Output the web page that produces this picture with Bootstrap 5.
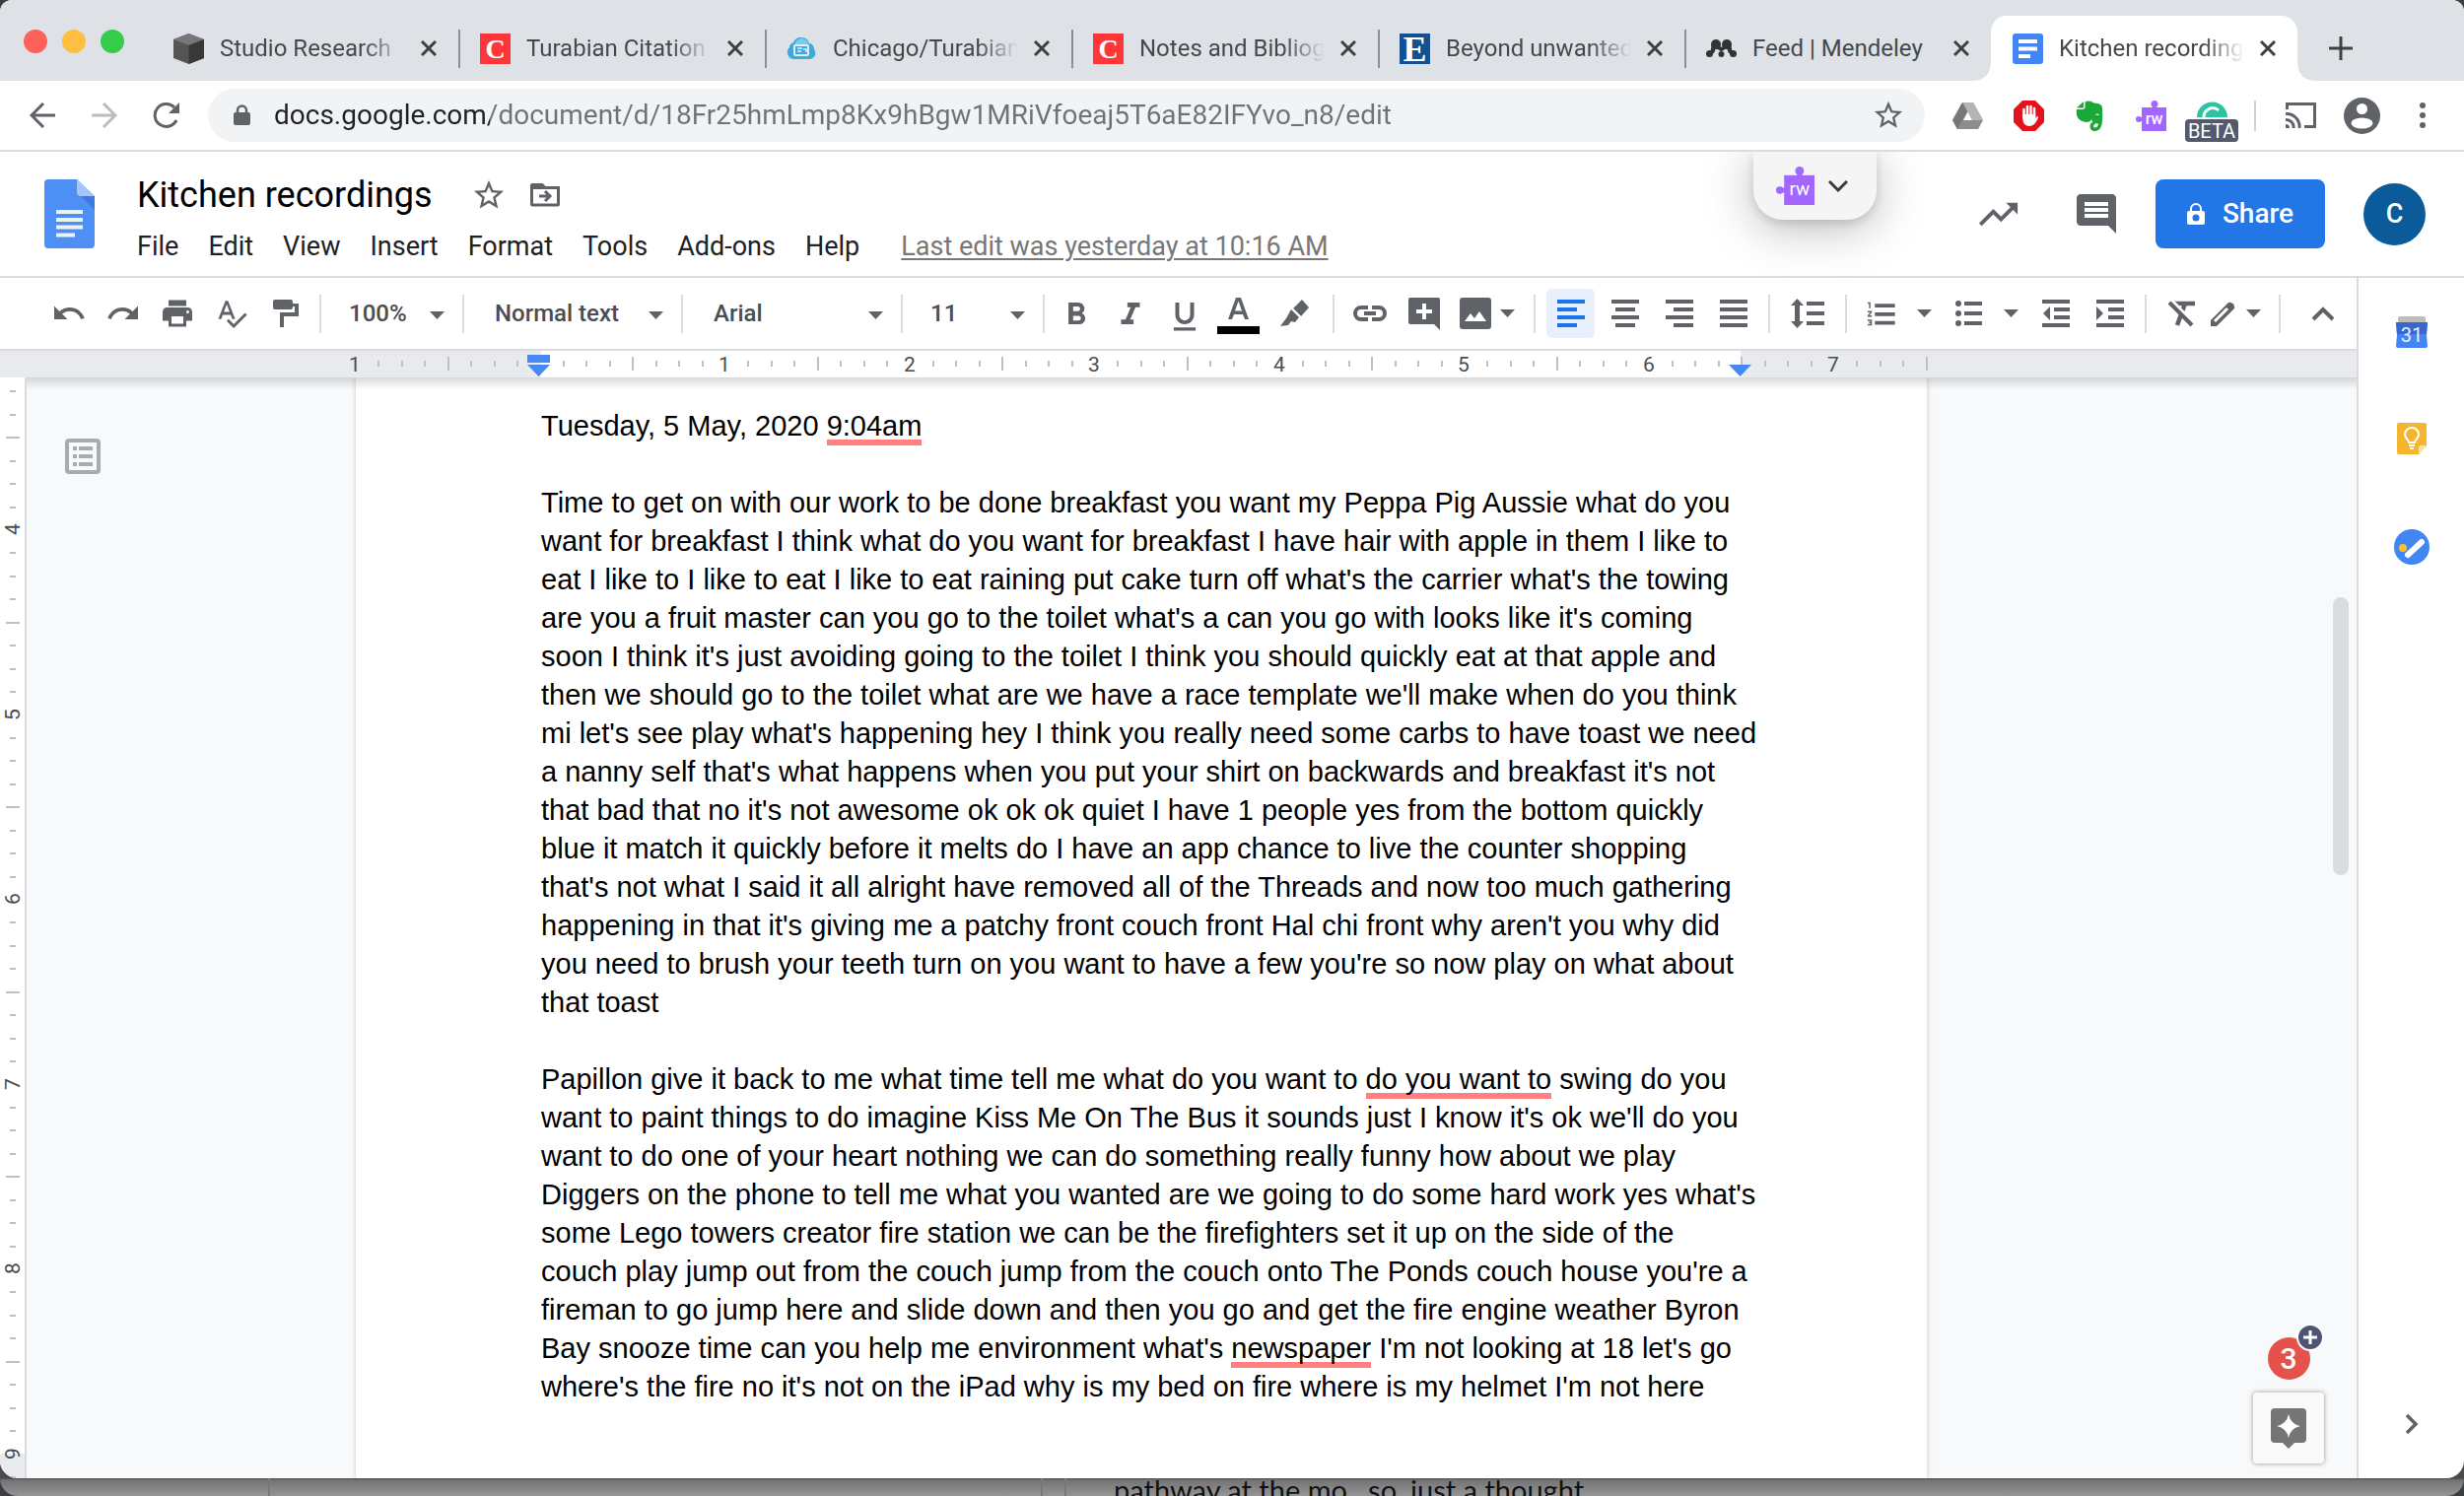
<!DOCTYPE html>
<html lang="en">
<head>
<meta charset="utf-8">
<meta name="viewport" content="width=device-width, initial-scale=1">
<title>Kitchen recordings - Google Docs</title>
<link rel="stylesheet" href="https://cdn.jsdelivr.net/npm/bootstrap@5.3.0/dist/css/bootstrap.min.css">
<style>
:root{--ink:#5f6368;--line:#dadce0;--docblue:#4688f4}
body{font-family:Roboto,"Liberation Sans",sans-serif;background:#3a3d42;color:#202124}
button{border:0;background:none;padding:0;color:inherit}
svg{display:block;flex:none}
.ico{fill:currentColor}
.win{background:#fff;border-radius:12px 12px 18px 18px;overflow:hidden;min-height:0}

/* tab strip */
.strip{background:#dee1e6;height:82px;padding:16px 0 0 24px}
.lights{gap:15px;width:130px;padding-bottom:14px}
.light{width:24px;height:24px;border-radius:50%}
.tabitem{flex:0 1 311px;min-width:0;height:66px;padding:0 22px;gap:16px;position:relative;font-size:24px;color:#45494d;text-decoration:none}
.tabitem+.tabitem:not(.on)::before{content:"";position:absolute;left:0;top:14px;height:39px;width:2px;background:#8b8f94}
.tabtext{white-space:nowrap;overflow:hidden;-webkit-mask-image:linear-gradient(90deg,#000 78%,transparent);mask-image:linear-gradient(90deg,#000 78%,transparent)}
.tabtext.full{-webkit-mask-image:none;mask-image:none}
.on{background:#fff;border-radius:16px 16px 0 0}
.on::before,.on::after{content:"";position:absolute;bottom:0;width:16px;height:16px}
.on::before{left:-16px;background:radial-gradient(circle at 0 0,transparent 15px,#fff 16px)}
.on::after{right:-16px;background:radial-gradient(circle at 100% 0,transparent 15px,#fff 16px)}
.newtab{width:87px;color:#3c4043}

/* address row */
.addr{height:72px;padding:0 11px;border-bottom:2px solid var(--line);color:var(--ink)}
.cell{width:63px;height:54px;display:flex;align-items:center;justify-content:center;position:relative}
.pill~.cell{width:62px}
.pill{background:#f1f3f4;height:54px;border-radius:27px;margin:0 12px 0 11px;padding:0 20px 0 26px}
.url{border:0;outline:0;font-size:28px;min-width:0;padding:0;margin-left:24px;background:linear-gradient(90deg,#202124 219px,#6f7377 219px);-webkit-background-clip:text;background-clip:text;color:transparent}
.vsep{width:2px;height:31px;background:#d0d2d5;margin:0 14px 0 12px}
.beta{position:absolute;left:4px;bottom:0;width:54px;height:23px;border-radius:4px;background:#545a6d;color:#fff;font-size:20px;line-height:24px;text-align:center}

/* document header */
.dochead{height:128px;padding:0 39px 0 45px;border-bottom:2px solid var(--line);position:relative}
.headtext{padding:9px 0 0 43px}
.title{border:0;outline:0;padding:0;font-size:36px;line-height:44px;height:44px;width:331px;color:#000}
.menu{font-size:27px;line-height:36px;gap:30px;margin-top:12px}
.menu a{color:#202124;text-decoration:none}
.menu .last{color:#777;text-decoration:underline;margin-left:12px;text-underline-offset:3px;text-decoration-thickness:2px}
.share{background:#2376e5;color:#fff;width:172px;height:70px;border-radius:8px;font-size:28px;font-weight:500;gap:18px}
.avatar{width:63px;height:63px;border-radius:50%;background:#0b5a99;color:#fff;font-size:27px;font-weight:500;margin-left:39px}
.rwpop{position:absolute;top:0;right:596px;width:125px;height:69px;border-radius:0 0 30px 30px;background:#f5f5f5;box-shadow:0 8px 50px rgba(0,0,0,.28),0 4px 10px rgba(0,0,0,.12);gap:14px;padding:0 6px 0 0;color:#3c3c3c;clip-path:inset(0 -90px -110px -90px)}

/* toolbar */
.tools{height:74px;padding-left:42px;color:var(--ink);border-bottom:2px solid var(--line)}
.tb{width:49px;height:50px;margin:0 3px;border-radius:5px;display:flex;align-items:center;justify-content:center;flex:none}
.tb.sel{background:#e8f0fe;color:#1a73e8}
.wide{width:54px}.slim{width:24px}.fit{width:44px}
.drop{width:33px;height:50px;padding-left:8px;flex:none}
.drop.near{width:26px;padding-left:0}
.tsep{width:2px;height:39px;background:var(--line);flex:none;margin:0 8px}
.tsep.flush{margin:0 0 0 7px}.tsep.tight{margin:0}
.pick{appearance:none;-webkit-appearance:none;border:0;outline:0;height:50px;padding:0 0 0 31px;font-size:24px;font-weight:500;color:#4a4d51;flex:none;background:url("data:image/svg+xml,%3Csvg xmlns='http://www.w3.org/2000/svg' width='15' height='8'%3E%3Cpath d='M0 0h15L7.500 8z' fill='%235f6368'/%3E%3C/svg%3E") no-repeat right 18px top 23px}
.pick.zoom{width:143px;padding-left:28px}.pick.style{width:220px}.pick.face{width:221px}.pick.size{width:142px;padding-left:28px}

/* rulers and page */
.hruler{height:27px;background:#e8eaed;padding-left:361px}
.hruler svg,.vruler svg{overflow:visible;font-size:21px;fill:#4a4d51}
.vruler{width:27px;border-right:2px solid var(--line);overflow:hidden}
.canvas{background:#f8f9fb;position:relative;min-height:0;overflow:hidden}
.canvas::before{content:"";position:absolute;z-index:2;left:0;right:0;top:0;height:12px;background:linear-gradient(rgba(60,64,67,.2),transparent)}
.outline{padding:62px 0 0 39px;width:334px;color:#a9abae}
.sheet{width:1594px;background:#fff;padding:30px 0 0 188px;box-shadow:0 0 5px rgba(60,64,67,.25);font-family:"Liberation Sans",Arial,sans-serif;font-size:29px;line-height:39px;color:#000;white-space:nowrap}
.sheet p{margin:0 0 39px}
.err{padding-bottom:4px;background:linear-gradient(#ff8080,#ff8080) no-repeat bottom/100% 6px}
.thumb{position:absolute;right:8px;top:223px;width:16px;height:282px;border-radius:8px;background:#dadce0}
.float{position:absolute;right:33px;bottom:15px;z-index:3}
.explore{width:72px;height:72px;border-radius:4px;background:#fafafa;box-shadow:0 0 5px rgba(0,0,0,.4);color:#757575}
.count{width:43px;height:43px;border-radius:50%;background:#e5524b;color:#fff;font-size:30px;font-weight:500;line-height:43px;text-align:center;position:relative;margin-bottom:13px}
.count svg{position:absolute;left:29px;top:-14px}
.side{width:109px;border-left:2px solid var(--line);padding:39px 0 45px}
.side .links{gap:76px}

/* window behind */
.behind{height:18px;flex:none;margin-top:-20px;padding-top:20px;box-sizing:content-box;background:linear-gradient(#4a4a4a 20px,#747474 22px,#959595);z-index:-1;position:relative;border-radius:0 0 18px 18px;overflow:hidden;font-family:Lato,"Noto Sans",sans-serif;font-size:29px;line-height:24px;color:#111}
.behind .pane{flex:0 0 274px;border-right:2px solid #777}
.behind .pane.two{flex-basis:784px}.behind .pane.three{flex-basis:24px}
</style>
</head>
<body class="vh-100 d-flex flex-column overflow-hidden">
<main class="win flex-grow-1 d-flex flex-column">

<nav class="strip d-flex flex-shrink-0" aria-label="Tabs">
  <div class="lights d-flex align-items-center flex-shrink-0">
    <span class="light" style="background:#fc615c"></span><span class="light" style="background:#fdbe41"></span><span class="light" style="background:#35cb4b"></span>
  </div>
  <a class="tabitem d-flex align-items-center" href="#"><svg width="31" height="31" viewBox="0 0 31 31"><path d="M15.500 0 31 6v19l-15.500 6L0 25V6z" fill="#555"/><path d="M15.500 0 31 6l-15.500 6L0 6z" fill="#777"/><path d="M31 6v19l-15.500 6V12z" fill="#383838"/></svg><span class="tabtext flex-grow-1">Studio Research</span><svg width="16" height="16" viewBox="0 0 16 16"><path d="M1 1l14 14M15 1 1 15" stroke="#3c4043" stroke-width="3"/></svg></a>
  <a class="tabitem d-flex align-items-center" href="#"><svg width="31" height="31"><rect width="31" height="31" fill="#ff3639"/><text x="15.500" y="25" text-anchor="middle" font-family="Liberation Serif" font-weight="700" font-size="28" fill="#fff">C</text></svg><span class="tabtext flex-grow-1">Turabian Citation</span><svg width="16" height="16" viewBox="0 0 16 16"><path d="M1 1l14 14M15 1 1 15" stroke="#3c4043" stroke-width="3"/></svg></a>
  <a class="tabitem d-flex align-items-center" href="#"><svg width="31" height="31" viewBox="0 0 31 31"><path d="M8 26a7 7 0 0 1-5-12c0-2 1-4 4-5 1-3 4-5 8-5s7 2 8 6c3 0 5 3 5 6 3 4 1 9-4 10z" fill="#3fa9da"/><path d="M8 12c1-5 5-7 7-7 4 0 7 2 7 6" fill="#7ccaf0"/><rect x="8" y="12" width="14" height="10" rx="1" fill="none" stroke="#d9f1fc" stroke-width="2"/><path d="M11 15h5M11 18h4M17 16h3v3" stroke="#d9f1fc" fill="none" stroke-width="1.500"/></svg><span class="tabtext flex-grow-1">Chicago/Turabian</span><svg width="16" height="16" viewBox="0 0 16 16"><path d="M1 1l14 14M15 1 1 15" stroke="#3c4043" stroke-width="3"/></svg></a>
  <a class="tabitem d-flex align-items-center" href="#"><svg width="31" height="31"><rect width="31" height="31" fill="#ff3639"/><text x="15.500" y="25" text-anchor="middle" font-family="Liberation Serif" font-weight="700" font-size="28" fill="#fff">C</text></svg><span class="tabtext flex-grow-1">Notes and Bibliog</span><svg width="16" height="16" viewBox="0 0 16 16"><path d="M1 1l14 14M15 1 1 15" stroke="#3c4043" stroke-width="3"/></svg></a>
  <a class="tabitem d-flex align-items-center" href="#"><svg width="31" height="31"><rect width="31" height="31" fill="#12518e"/><text x="15.500" y="28" text-anchor="middle" font-family="Liberation Serif" font-weight="700" font-size="36" fill="#fff">E</text></svg><span class="tabtext flex-grow-1">Beyond unwanted</span><svg width="16" height="16" viewBox="0 0 16 16"><path d="M1 1l14 14M15 1 1 15" stroke="#3c4043" stroke-width="3"/></svg></a>
  <a class="tabitem d-flex align-items-center" href="#"><svg width="31" height="31" viewBox="0 0 31 31" fill="#333"><circle cx="10" cy="11" r="5"/><circle cx="21" cy="11" r="5"/><circle cx="3.500" cy="20.500" r="3.500"/><circle cx="27.500" cy="20.500" r="3.500"/><circle cx="15.500" cy="21" r="3"/><path d="M6 10h5l4.500 4L20 10h5l2 11-4-1-2-5-5 3h-1l-5-3-2 5-4 1z"/></svg><span class="tabtext full flex-grow-1">Feed | Mendeley</span><svg width="16" height="16" viewBox="0 0 16 16"><path d="M1 1l14 14M15 1 1 15" stroke="#3c4043" stroke-width="3"/></svg></a>
  <a class="tabitem on d-flex align-items-center" href="#" aria-current="page"><svg width="31" height="31"><rect width="31" height="31" rx="3" fill="#4285f4"/><path d="M6 8h19M6 15.500h19M6 23h12" stroke="#fff" stroke-width="4"/></svg><span class="tabtext flex-grow-1">Kitchen recording</span><svg width="16" height="16" viewBox="0 0 16 16"><path d="M1 1l14 14M15 1 1 15" stroke="#3c4043" stroke-width="3"/></svg></a>
  <button class="newtab d-flex align-items-center justify-content-center" aria-label="New tab"><svg width="24" height="24"><path d="M12 0v24M0 12h24" stroke="#3c4043" stroke-width="3"/></svg></button>
</nav>

<div class="addr d-flex align-items-center flex-shrink-0">
  <button class="cell" aria-label="Back"><svg width="26" height="26" fill="none" stroke="#5f6368" stroke-width="3"><path d="M26 13H2M14 1 2 13l12 12"/></svg></button>
  <button class="cell" aria-label="Forward"><svg width="26" height="26" fill="none" stroke="#babcbe" stroke-width="3"><path d="M0 13h24M12 1l12 12-12 12"/></svg></button>
  <button class="cell" aria-label="Reload"><svg width="28" height="28" fill="none" stroke="#5f6368" stroke-width="3"><path d="M24 19A11.500 11.500 0 1 1 22 6"/><path d="M27 1v11H16z" fill="#5f6368" stroke="none"/></svg></button>
  <div class="pill flex-grow-1 d-flex align-items-center">
    <svg width="17" height="22" viewBox="0 0 17 22"><rect y="8" width="17" height="13" rx="2" fill="#5f6368"/><path d="M4 9V6a4.500 4.500 0 0 1 9 0v3" fill="none" stroke="#5f6368" stroke-width="2.500"/></svg>
    <input class="url flex-grow-1" type="text" aria-label="Address" value="docs.google.com/document/d/18Fr25hmLmp8Kx9hBgw1MRiVfoeaj5T6aE82IFYvo_n8/edit">
    <button aria-label="Bookmark"><svg class="ico" width="34" height="34" viewBox="0 0 24 24"><path d="M22 9.240l-7.190-.620L12 2 9.190 8.630 2 9.240l5.460 4.730L5.820 21 12 17.270 18.180 21l-1.630-7.030L22 9.240zM12 15.400l-3.760 2.270 1-4.280-3.320-2.880 4.380-.380L12 6.100l1.710 4.040 4.380.38-3.320 2.880 1 4.280L12 15.400z"/></svg></button>
  </div>
  <button class="cell" aria-label="Drive"><svg width="31" height="27"><path d="M10 0h11l10 18-5 9H5l-5-9z" fill="#8d8d8d"/><path d="M10 0h11l10 18H20z" fill="#b4b4b4"/><path d="M0 18 10 0l5 9L5 27z" fill="#777"/><path d="M15.500 9.500 20 18h-9z" fill="#fff"/></svg></button>
  <button class="cell" aria-label="AdBlock"><svg width="31" height="31"><path d="M9 0h13l9 9v13l-9 9H9l-9-9V9z" fill="#e1131d"/><path d="M10.500 17V9M14 16V6M17.500 16V6M21 17V8" stroke="#fff" stroke-width="2.500" stroke-linecap="round"/><path d="M9.300 14h13v4l2-2c1 0 1 1 .5 2-2 4-4 8-8.800 8-4 0-6.700-3-6.700-8z" fill="#fff"/></svg></button>
  <button class="cell" aria-label="Evernote"><svg width="28" height="31" viewBox="0 0 28 31" fill="#1aa839"><path d="M1 9h6c1.500 0 2.500-1 2.500-2.500V1.500C13-.5 17 1 18 2.500c4 0 7.500 1 8.500 3 1 5 1 13 0 18.500-1 5-4 7-7 7s-5-2-5-5 2-4.500 5-4.500v3c-2 0-2 3 0 3s3.500-2 3.500-4c-4 0-6-1-7-4.500-1 3-4 3.500-8 2.500C2 20 0 15 1 9z"/><path d="M8 1v6.500H1z"/><path d="M20 14.500c1-1.500 3-1.500 4 .5z" fill="#fff"/></svg></button>
  <button class="cell" aria-label="Read and write"><svg width="31" height="31"><rect x="6" y="7" width="25" height="24" fill="#a366ff"/><circle cx="19" cy="3.500" r="3.500" fill="#a366ff"/><path d="M17 3h4v5h-4zM3 17h5v4H3z" fill="#a366ff"/><circle cx="3" cy="19" r="3" fill="#a366ff"/><text x="18.500" y="24" text-anchor="middle" font-size="16" font-weight="500" fill="#fff">rw</text></svg></button>
  <button class="cell" aria-label="Grammarly"><svg width="31" height="31"><path d="M0 17a15.500 15.500 0 0 1 31 0z" fill="#2bc4a0"/><path d="M7 17a9 9 0 0 1 15-7" fill="none" stroke="#fff" stroke-width="3"/></svg><span class="beta">BETA</span></button>
  <span class="vsep"></span>
  <button class="cell" aria-label="Cast"><svg width="31" height="26" fill="none" stroke="#5f6368" stroke-width="3"><path d="M1.500 7V1.500h28v23H19M0 11.500A13 13 0 0 1 14 26M0 17.500A7.500 7.500 0 0 1 8 26"/><path d="M0 22a4 4 0 0 1 4 4H0z" fill="#5f6368" stroke="none"/></svg></button>
  <button class="cell" aria-label="Profile"><svg width="37" height="37"><circle cx="18.500" cy="18.500" r="18.500" fill="#5f6368"/><circle cx="18.500" cy="11.500" r="5.500" fill="#fff"/><ellipse cx="18.500" cy="26" rx="11" ry="5.500" fill="#fff"/></svg></button>
  <button class="cell" aria-label="Menu"><svg width="6" height="26" fill="#5f6368"><circle cx="3" cy="3" r="3"/><circle cx="3" cy="13" r="3"/><circle cx="3" cy="23" r="3"/></svg></button>
</div>

<header class="dochead d-flex align-items-center flex-shrink-0">
  <svg width="51" height="70" viewBox="0 0 51 70"><path d="M4 0h29l18 17v49a4 4 0 0 1-4 4H4a4 4 0 0 1-4-4V4a4 4 0 0 1 4-4z" fill="#4e8ff5"/><path d="M33 0l18 17H37a4 4 0 0 1-4-4z" fill="#a6c5fa"/><path d="M37 17h14v14z" fill="#3e79dc"/><path d="M12 33h27M12 41h27M12 48.500h27M12 56.500h19" stroke="#f1f1f1" stroke-width="4"/></svg>
  <div class="headtext flex-grow-1">
    <div class="d-flex align-items-center">
      <input class="title" type="text" aria-label="Document title" value="Kitchen recordings">
      <button class="me-4 ms-2" aria-label="Star"><svg class="ico" style="color:#5f6368" width="36" height="36" viewBox="0 0 24 24"><path d="M22 9.240l-7.190-.620L12 2 9.190 8.630 2 9.240l5.460 4.730L5.820 21 12 17.270 18.180 21l-1.630-7.030L22 9.240zM12 15.400l-3.760 2.270 1-4.280-3.320-2.880 4.380-.380L12 6.100l1.710 4.040 4.380.38-3.320 2.880 1 4.280L12 15.400z"/></svg></button>
      <button aria-label="Move"><svg width="30" height="24" fill="none" stroke="#5f6368" stroke-width="3"><path d="M1.500 3v18a1 1 0 0 0 1 1h25a1 1 0 0 0 1-1V4.500H15l-3-3H2.500a1 1 0 0 0-1 1.500z"/><path d="M1 1h11l4 5H1z" fill="#5f6368" stroke="none"/><path d="M9 13h10M15 8l5 5-5 5"/></svg></button>
    </div>
    <nav class="menu d-flex" aria-label="Document menu">
      <a href="#">File</a><a href="#">Edit</a><a href="#">View</a><a href="#">Insert</a><a href="#">Format</a><a href="#">Tools</a><a href="#">Add-ons</a><a href="#">Help</a>
      <a class="last" href="#">Last edit was yesterday at 10:16 AM</a>
    </nav>
  </div>
  <button class="rwpop d-flex align-items-center justify-content-center" aria-label="Open Read and write"><svg width="39" height="39" viewBox="0 0 31 31"><rect x="6.500" y="7" width="24.500" height="24" fill="#a366ff"/><circle cx="19" cy="3.500" r="3.500" fill="#a366ff"/><path d="M17 3h4v5h-4zM3 17h5v4H3z" fill="#a366ff"/><circle cx="3" cy="19" r="3" fill="#a366ff"/><text x="19" y="23" text-anchor="middle" font-size="15" fill="#fff">rw</text></svg><svg width="20" height="12" fill="none" stroke="#3c3c3c" stroke-width="3"><path d="M1 1l9 9 9-9"/></svg></button>
  <button class="me-5" aria-label="Activity"><svg class="ico" style="color:#5f6368" width="47" height="47" viewBox="0 0 24 24"><path d="M16 6l2.290 2.290-4.880 4.880-4-4L2 16.590 3.410 18l6-6 4 4 6.300-6.290L22 12V6z"/></svg></button>
  <button class="ms-2 me-4" aria-label="Comments"><svg class="ico me-3" style="color:#5f6368" width="40" height="40" viewBox="2 2 20 20"><path d="M21.990 4c0-1.100-.890-2-1.990-2H4c-1.100 0-2 .9-2 2v12c0 1.100.9 2 2 2h14l4 4-.010-18zM18 14H6v-2h12v2zm0-3H6V9h12v2zm0-3H6V6h12v2z"/></svg></button>
  <button class="share d-flex align-items-center justify-content-center" aria-label="Share"><svg width="18" height="22" viewBox="0 0 18 22"><path d="M2 8h14a2 2 0 0 1 2 2v10a2 2 0 0 1-2 2H2a2 2 0 0 1-2-2V10a2 2 0 0 1 2-2z" fill="#fff"/><path d="M4 9V6a5 5 0 0 1 10 0v3" fill="none" stroke="#fff" stroke-width="2"/><circle cx="9" cy="15" r="3.500" fill="#2376e5"/></svg>Share</button>
  <button class="avatar" aria-label="Account">C</button>
</header>

<div class="d-flex flex-grow-1" style="min-height:0">
<section class="flex-grow-1 d-flex flex-column" style="min-width:0">
  <div class="tools d-flex align-items-center flex-shrink-0" role="toolbar" aria-label="Formatting">
    <button class="tb" aria-label="Undo"><svg class="ico" width="36" height="36" viewBox="0 0 24 24"><path d="M12.500 8c-2.650 0-5.050.99-6.900 2.600L2 7v9h9l-3.620-3.620c1.390-1.160 3.160-1.880 5.120-1.880 3.540 0 6.550 2.310 7.600 5.500l2.370-.780C21.080 11.030 17.150 8 12.500 8z"/></svg></button>
    <button class="tb" aria-label="Redo"><svg class="ico" width="36" height="36" viewBox="0 0 24 24"><path d="M18.400 10.600C16.550 8.990 14.150 8 11.500 8c-4.650 0-8.580 3.030-9.960 7.220L3.900 16c1.050-3.190 4.050-5.500 7.600-5.500 1.950 0 3.730.72 5.120 1.880L13 16h9V7l-3.600 3.600z"/></svg></button>
    <button class="tb" aria-label="Print"><svg class="ico" width="36" height="36" viewBox="0 0 24 24"><path d="M19 8H5c-1.660 0-3 1.340-3 3v6h4v4h12v-4h4v-6c0-1.660-1.340-3-3-3zm-3 11H8v-5h8v5zm3-7c-.550 0-1-.450-1-1s.450-1 1-1 1 .450 1 1-.450 1-1 1zm-1-9H6v4h12V3z"/></svg></button>
    <button class="tb" aria-label="Spelling"><svg class="ico" width="34" height="34" viewBox="0 0 24 24"><path d="M12.450 16h2.090L9.430 3H7.570L2.460 16h2.090l1.120-3h5.640l1.140 3zm-6.020-5L8.500 5.480 10.570 11H6.430zm15.160.59l-8.090 8.090L9.830 16l-1.410 1.410 5.090 5.090L23 13l-1.410-1.410z"/></svg></button>
    <button class="tb" aria-label="Paint format"><svg class="ico" width="26" height="28"><path d="M2 0h16a2 2 0 0 1 2 2v2h6v13H11v11H7V13h15V7h-2v1a2 2 0 0 1-2 2H2a2 2 0 0 1-2-2V2a2 2 0 0 1 2-2z"/></svg></button>
    <span class="tsep flush"></span>
    <select class="pick zoom" aria-label="Zoom"><option>100%</option></select>
    <span class="tsep tight"></span>
    <select class="pick style" aria-label="Styles"><option>Normal text</option></select>
    <span class="tsep tight"></span>
    <select class="pick face" aria-label="Font"><option>Arial</option></select>
    <span class="tsep tight"></span>
    <select class="pick size" aria-label="Font size"><option>11</option></select>
    <span class="tsep tight"></span>
    <span class="ps-1"></span>
    <button class="tb" aria-label="Bold"><svg class="ico" width="38" height="38" viewBox="0 0 24 24"><path d="M15.600 11.790c.970-.670 1.650-1.770 1.650-2.790 0-2.260-1.750-4-4-4H7v14h7.040c2.090 0 3.710-1.700 3.710-3.790 0-1.520-.860-2.820-2.150-3.420zM10 7.500h3c.830 0 1.500.67 1.500 1.500s-.670 1.500-1.500 1.500h-3v-3zm3.500 9H10v-3h3.500c.830 0 1.500.67 1.500 1.500s-.670 1.500-1.500 1.500z"/></svg></button>
    <button class="tb" aria-label="Italic"><svg class="ico" width="38" height="38" viewBox="0 0 24 24"><path d="M10 5v3h2.210l-3.420 8H6v3h8v-3h-2.210l3.420-8H18V5z"/></svg></button>
    <button class="tb" aria-label="Underline"><svg class="ico" width="38" height="38" viewBox="0 0 24 24"><path d="M12 19c3.310 0 6-2.690 6-6V5h-2.500v8c0 1.930-1.570 3.500-3.500 3.500S8.500 14.930 8.500 13V5H6v8c0 3.310 2.690 6 6 6zm-7 2v2h14v-2H5z"/></svg></button>
    <button class="tb" aria-label="Text color"><svg class="ico" width="43" height="44"><path d="M19 6h5l8 22h-4l-2-5h-9l-2 5h-4zM18 19.500h7l-3.500-10z"/><path d="M0 32h43v12H0z" fill="#fff"/><path d="M0 35h43v8H0z" fill="#000"/></svg></button>
    <button class="tb wide" aria-label="Highlight"><svg class="ico" width="30" height="28"><path d="M22 0l7 8-8 9-8-8zM11 10l8 8-4 5-4-1-3 4-8 1 6-8z"/><path d="M12 9l9 9" stroke="#fff" stroke-width="1.500"/></svg></button>
    <span class="tsep"></span>
    <button class="tb" aria-label="Link"><svg class="ico" width="36" height="18"><path d="M16 1v4H9a4 4 0 0 0 0 8h7v4H9A8 8 0 0 1 9 1zM20 1v4h7a4 4 0 0 1 0 8h-7v4h7a8 8 0 0 0 0-16zM12 7h12v4H12z"/></svg></button>
    <button class="tb" aria-label="Add comment"><svg width="32" height="33"><path d="M2 0h28a2 2 0 0 1 2 2v31l-6-6H2a2 2 0 0 1-2-2V2a2 2 0 0 1 2-2z" fill="#5f6368"/><path d="M16 6v16M8 14h16" stroke="#fff" stroke-width="4"/></svg></button>
    <button class="tb fit" aria-label="Image"><svg width="32" height="32"><rect width="32" height="32" rx="3" fill="#5f6368"/><path d="M5 24l6-8 4 5 5-7 7 10z" fill="#fff"/></svg></button>
    <button class="drop near" aria-label="Image options"><svg class="ico" width="15" height="8"><path d="M0 0h15L7.500 8z"/></svg></button>
    <span class="tsep"></span>
    <button class="tb sel" aria-label="Left align"><svg class="ico" width="28" height="28"><path d="M0 0h28v4H0zM0 8h20v4H0zM0 16h28v4H0zM0 24h20v4H0z"/></svg></button>
    <button class="tb" aria-label="Center align"><svg class="ico" width="28" height="28"><path d="M0 0h28v4H0zM4 8h20v4H4zM0 16h28v4H0zM4 24h20v4H4z"/></svg></button>
    <button class="tb" aria-label="Right align"><svg class="ico" width="28" height="28"><path d="M0 0h28v4H0zM8 8h20v4H8zM0 16h28v4H0zM8 24h20v4H8z"/></svg></button>
    <button class="tb" aria-label="Justify"><svg class="ico" width="28" height="28"><path d="M0 0h28v4H0zM0 8h28v4H0zM0 16h28v4H0zM0 24h28v4H0z"/></svg></button>
    <span class="tsep"></span>
    <button class="tb wide" aria-label="Line spacing"><svg class="ico" width="34" height="30"><path d="M6.500 0 13 7H9v16h4l-6.500 7L0 23h4V7H0zM16 3h18v4H16zM16 13h18v4H16zM16 23h18v4H16z"/></svg></button>
    <span class="tsep"></span>
    <button class="tb" aria-label="Numbered list"><svg class="ico" width="35" height="35" viewBox="0 0 24 24"><path d="M2 17h2v.500H3v1h1v.500H2v1h3v-4H2v1zm1-9h1V4H2v1h1v3zm-1 3h1.800L2 13.100v.900h3v-1H3.200L5 10.900V10H2v1zm5-6v2.500h14V5H7zm0 14.500h14V17H7v2.500zm0-6h14V11H7v2.500z"/></svg></button>
    <button class="drop" aria-label="Numbered list options"><svg class="ico" width="15" height="8"><path d="M0 0h15L7.500 8z"/></svg></button>
    <button class="tb" aria-label="Bulleted list"><svg class="ico" width="27" height="26"><circle cx="3" cy="3" r="3"/><circle cx="3" cy="13" r="3"/><circle cx="3" cy="23" r="3"/><path d="M9 1h18v4H9zM9 11h18v4H9zM9 21h18v4H9z"/></svg></button>
    <button class="drop" aria-label="Bulleted list options"><svg class="ico" width="15" height="8"><path d="M0 0h15L7.500 8z"/></svg></button>
    <button class="tb" aria-label="Decrease indent"><svg class="ico" width="28" height="28"><path d="M0 0h28v4H0zM12 8h16v4H12zM12 16h16v4H12zM0 24h28v4H0zM1 14l7-7v14z"/></svg></button>
    <button class="tb" aria-label="Increase indent"><svg class="ico" width="28" height="28"><path d="M0 0h28v4H0zM12 8h16v4H12zM12 16h16v4H12zM0 24h28v4H0zM7 14 0 7v14z"/></svg></button>
    <span class="tsep"></span>
    <button class="tb" aria-label="Clear formatting"><svg width="28" height="28" fill="none" stroke="#5f6368"><path d="M6 4h21M17 4l-8 22" stroke-width="4.500"/><path d="M3 0l24 25" stroke="#fff" stroke-width="3"/><path d="M1 3l23 23" stroke-width="4"/></svg></button>
    <button class="tb slim" aria-label="Editing mode"><svg width="28" height="28"><path d="M1 21 19 3a5 5 0 0 1 6 6L7 27H1z" fill="#5f6368"/><path d="M5 22 18 9" stroke="#fff" stroke-width="3"/></svg></button>
    <button class="drop" aria-label="Mode options"><svg class="ico" width="15" height="8"><path d="M0 0h15L7.500 8z"/></svg></button>
    <span class="tsep"></span>
    <button class="flex-grow-1 d-flex justify-content-center" aria-label="Hide menus"><svg width="24" height="15" fill="none" stroke="#5f6368" stroke-width="4"><path d="M2 13 12 3l10 10"/></svg></button>
  </div>

  <div class="hruler flex-shrink-0"><svg id="hr" width="1594" height="27"></svg></div>

  <div class="d-flex flex-grow-1" style="min-height:0">
    <div class="vruler flex-shrink-0"><svg id="vr" width="25" height="1117"></svg></div>
    <div class="canvas flex-grow-1 d-flex">
      <div class="outline flex-shrink-0"><button aria-label="Show outline"><svg width="36" height="36"><rect x="2" y="2" width="32" height="32" rx="2" fill="none" stroke="currentColor" stroke-width="4"/><path d="M8 10h4M14 10h14M8 18h4M14 18h14M8 26h4M14 26h14" stroke="currentColor" stroke-width="4"/></svg></button></div>
      <article class="sheet flex-shrink-0">
        <p>Tuesday, 5 May, 2020 <span class="err">9:04am</span></p>
        <p>Time to get on with our work to be done breakfast you want my Peppa Pig Aussie what do you<br>want for breakfast I think what do you want for breakfast I have hair with apple in them I like to<br>eat I like to I like to eat I like to eat raining put cake turn off what's the carrier what's the towing<br>are you a fruit master can you go to the toilet what's a can you go with looks like it's coming<br>soon I think it's just avoiding going to the toilet I think you should quickly eat at that apple and<br>then we should go to the toilet what are we have a race template we'll make when do you think<br>mi let's see play what's happening hey I think you really need some carbs to have toast we need<br>a nanny self that's what happens when you put your shirt on backwards and breakfast it's not<br>that bad that no it's not awesome ok ok ok quiet I have 1 people yes from the bottom quickly<br>blue it match it quickly before it melts do I have an app chance to live the counter shopping<br>that's not what I said it all alright have removed all of the Threads and now too much gathering<br>happening in that it's giving me a patchy front couch front Hal chi front why aren't you why did<br>you need to brush your teeth turn on you want to have a few you're so now play on what about<br>that toast</p>
        <p>Papillon give it back to me what time tell me what do you want to <span class="err">do you want to</span> swing do you<br>want to paint things to do imagine Kiss Me On The Bus it sounds just I know it's ok we'll do you<br>want to do one of your heart nothing we can do something really funny how about we play<br>Diggers on the phone to tell me what you wanted are we going to do some hard work yes what's<br>some Lego towers creator fire station we can be the firefighters set it up on the side of the<br>couch play jump out from the couch jump from the couch onto The Ponds couch house you're a<br>fireman to go jump here and slide down and then you go and get the fire engine weather Byron<br>Bay snooze time can you help me environment what's <span class="err">newspaper</span> I'm not looking at 18 let's go<br>where's the fire no it's not on the iPad why is my bed on fire where is my helmet I'm not here</p>
      </article>
      <div class="thumb"></div>
      <div class="float d-flex flex-column align-items-center">
        <div class="count">3<svg width="28" height="28"><circle cx="14" cy="14" r="13" fill="#4f5472" stroke="#fff" stroke-width="2"/><path d="M14 7v14M7 14h14" stroke="#fff" stroke-width="3"/></svg></div>
        <button class="explore d-flex align-items-center justify-content-center" aria-label="Explore"><svg width="36" height="41"><path d="M4 0h28a4 4 0 0 1 4 4v27a4 4 0 0 1-4 4h-8l-6 6-6-6H4a4 4 0 0 1-4-4V4a4 4 0 0 1 4-4z" fill="#757575"/><path d="M18 6q2 10 12 12-10 2-12 12-2-10-12-12 10-2 12-12z" fill="#fff"/></svg></button>
      </div>
    </div>
  </div>
</section>

<aside class="side flex-shrink-0 d-flex flex-column align-items-center justify-content-between">
  <div class="links d-flex flex-column align-items-center">
    <button aria-label="Calendar"><svg width="32" height="32"><rect x="2" width="28" height="8" rx="2" fill="#bdbdbd"/><path d="M0 6h32l-1 13 1 11a2 2 0 0 1-2 2H2a2 2 0 0 1-2-2l1-11z" fill="#4285f4"/><path d="M0 6h32l-1 12H1z" fill="#3a66cf"/><text x="16" y="26" text-anchor="middle" font-size="20" fill="#e8effc">31</text></svg></button>
    <button aria-label="Keep"><svg width="32" height="32"><path d="M3 0h26a2 2 0 0 1 2 2v21l-8 9H3a2 2 0 0 1-2-2V2a2 2 0 0 1 2-2z" fill="#f5b52e"/><path d="M31 23l-8 9v-7a2 2 0 0 1 2-2z" fill="#fce0a0"/><path d="M13 20c0-3-4-4-4-8a7 7 0 0 1 14 0c0 4-4 5-4 8zM13 23h6M14 26h4" fill="none" stroke="#fff" stroke-width="2"/></svg></button>
    <button aria-label="Tasks"><svg width="36" height="36"><circle cx="18" cy="18" r="18" fill="#4285f4"/><circle cx="9" cy="19" r="4" fill="#fbc02d"/><path d="M14 26 28 13" stroke="#fff" stroke-width="6" stroke-linecap="round"/></svg></button>
  </div>
  <button aria-label="Hide side panel"><svg width="12" height="20" fill="none" stroke="#5f6368" stroke-width="3.500"><path d="M1 1l9 9-9 9"/></svg></button>
</aside>
</div>
</main>
<div class="behind d-flex"><span class="pane"></span><span class="pane two"></span><span class="pane three"></span><span class="ps-5">pathway at the mo.. so, just a thought</span></div>

<script src="https://cdn.jsdelivr.net/npm/bootstrap@5.3.0/dist/js/bootstrap.bundle.min.js"></script>
<script>
// Both rulers mark every eighth of an inch; one inch is 187.5px at this zoom.
var inch = 187.5;
(function () {
  var s = '<rect x="188" width="1217" height="27" fill="#fff"/>';
  for (var i = 0; i <= 68; i++) {
    var x = Math.round(i * inch / 8);
    if (i % 8 === 0) {
      if (i !== 8) s += '<text x="' + (x - 1) + '" y="21" text-anchor="middle">' + Math.abs(i / 8 - 1) + '</text>';
    } else if (i % 4 === 0) s += '<rect x="' + (x - 1) + '" y="6" width="2" height="14" fill="#bdc1c6"/>';
    else s += '<rect x="' + (x - 1) + '" y="10" width="2" height="6" fill="#bdc1c6"/>';
  }
  s += '<path d="M174 4h23v8h-23zM174 14h23l-11.500 12z" fill="#4688f4"/><path d="M1393 14h23l-11.500 12z" fill="#4688f4"/>';
  document.getElementById('hr').innerHTML = s;

  var v = '<rect y="1092" width="25" height="30" fill="#e8eaed"/>';
  for (var k = -6; k <= 41; k++) {
    var y = Math.round(154 + k * inch / 8);
    if (k % 8 === 0) v += '<text transform="translate(20 ' + y + ') rotate(-90)" text-anchor="middle">' + (4 + k / 8) + '</text>';
    else if (k % 4 === 0) v += '<rect x="6" y="' + y + '" width="14" height="2" fill="#bdc1c6"/>';
    else v += '<rect x="10" y="' + y + '" width="6" height="2" fill="#bdc1c6"/>';
  }
  document.getElementById('vr').innerHTML = v;
})();
</script>
</body>
</html>
